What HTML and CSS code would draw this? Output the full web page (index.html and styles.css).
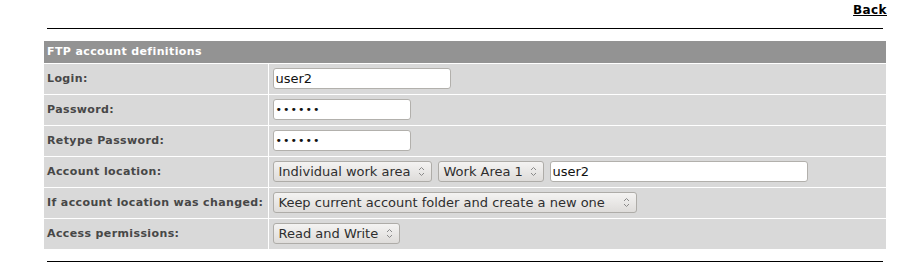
FILE: index.html
```html
<!DOCTYPE html>
<html>
  <head>
    <meta charset="utf-8">
    <title>FTP account definitions</title>
    <link rel="stylesheet" href="styles.css">
  </head>
  <body>
    <div class="page">
      <div class="topbar">
        <a href="#" class="back">Back</a>
      </div>
      <div class="rule"></div>
      <table class="form">
        <tr>
          <th colspan="2">FTP account definitions</th>
        </tr>
        <tr>
          <td class="name">Login:</td>
          <td class="value"><input class="text login" type="text" value="user2"></td>
        </tr>
        <tr>
          <td class="name">Password:</td>
          <td class="value"><input class="text pass" type="password" value="secret"></td>
        </tr>
        <tr>
          <td class="name">Retype Password:</td>
          <td class="value"><input class="text pass" type="password" value="secret"></td>
        </tr>
        <tr>
          <td class="name">Account location:</td>
          <td class="value">
            <div class="controls">
              <span class="select w-area">Individual work area<svg viewBox="0 0 7 11"><path d="M1 4 L3.5 1.5 L6 4" /><path d="M1 7 L3.5 9.5 L6 7" /></svg></span>
              <span class="select w-num">Work Area 1<svg viewBox="0 0 7 11"><path d="M1 4 L3.5 1.5 L6 4" /><path d="M1 7 L3.5 9.5 L6 7" /></svg></span>
              <input class="text folder" type="text" value="user2">
            </div>
          </td>
        </tr>
        <tr>
          <td class="name">If account location was changed:</td>
          <td class="value">
            <span class="select w-keep">Keep current account folder and create a new one<svg viewBox="0 0 7 11"><path d="M1 4 L3.5 1.5 L6 4" /><path d="M1 7 L3.5 9.5 L6 7" /></svg></span>
          </td>
        </tr>
        <tr>
          <td class="name">Access permissions:</td>
          <td class="value">
            <span class="select w-perm">Read and Write<svg viewBox="0 0 7 11"><path d="M1 4 L3.5 1.5 L6 4" /><path d="M1 7 L3.5 9.5 L6 7" /></svg></span>
          </td>
        </tr>
      </table>
      <div class="rule bottom"></div>
    </div>
  </body>
</html>
```

FILE: styles.css
```css
*, *:before, *:after {
  box-sizing: border-box;
}
html, body {
  margin: 0;
  padding: 0;
  background: #fff;
}
body {
  font-family: "DejaVu Sans", sans-serif;
  font-size: 11px;
}
.page {
  padding: 3px 31px 0 44px;
}
.topbar {
  display: flex;
  justify-content: flex-end;
  height: 17px;
  margin-right: -1px;
}
.back {
  font-weight: bold;
  font-size: 12px;
  letter-spacing: 0.4px;
  color: #000;
  text-decoration: underline;
  line-height: 14px;
}
.rule {
  height: 1px;
  background: #000;
  margin: 8px 3px 12px 3px;
}
.rule.bottom {
  margin: 12px 3px 0 3px;
}
.form {
  width: 100%;
  border-collapse: collapse;
  letter-spacing: 0.38px;
}
.form th {
  background: #939393;
  color: #fff;
  text-align: left;
  font-weight: bold;
  height: 22px;
  padding: 0 3px;
  border-bottom: 1px solid #fff;
}
.form td {
  background: #d9d9d9;
  height: 31px;
  padding: 0;
  border-top: 1px solid #fff;
}
.form td.name {
  width: 224px;
  padding-left: 3px;
  font-weight: bold;
  color: #474747;
  border-right: 1px solid #fff;
  white-space: nowrap;
}
.form td.value {
  padding-left: 4px;
  letter-spacing: 0;
}
.controls {
  display: flex;
  gap: 6px;
  align-items: center;
}
.text {
  display: block;
  height: 21px;
  border: 1px solid #b2b0ac;
  border-radius: 3px;
  background: #fff;
  font-family: "DejaVu Sans", sans-serif;
  font-size: 13px;
  color: #111;
  padding: 0 2px;
  outline: none;
}
.text[type="password"] {
  font-size: 11px;
  letter-spacing: 1px;
}
.login {
  width: 178px;
}
.pass {
  width: 138px;
}
.folder {
  width: 258px;
}
.select {
  position: relative;
  display: inline-block;
  vertical-align: middle;
  height: 21px;
  line-height: 19px;
  border: 1px solid #aeaca8;
  border-radius: 3px;
  background: linear-gradient(#f4f3f2, #dedcda);
  font-size: 13px;
  color: #2e2e2e;
  padding-left: 5px;
  white-space: nowrap;
}
.select svg {
  position: absolute;
  right: 6px;
  top: 4px;
  width: 7px;
  height: 11px;
  fill: none;
  stroke: #8a8a8a;
  stroke-width: 1;
}
.w-area {
  width: 159px;
}
.w-num {
  width: 106px;
}
.w-keep {
  width: 364px;
}
.w-perm {
  width: 127px;
}
```
